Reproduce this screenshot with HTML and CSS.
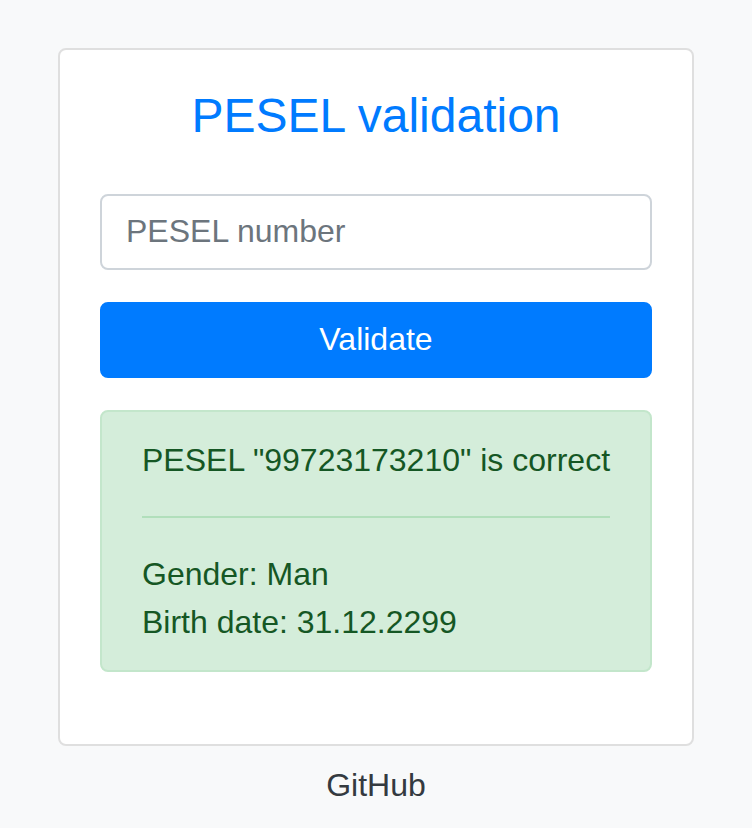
FILE: index.html
```html
<!DOCTYPE html>
<html lang="en">
<head>
<meta charset="utf-8">
<title>PESEL validation</title>
<link rel="stylesheet" href="styles.css">
</head>
<body>
<main class="page">
  <section class="card">
    <h1 class="title">PESEL validation</h1>
    <input class="field" type="text" placeholder="PESEL number">
    <button class="btn" type="button">Validate</button>
    <div class="alert">
      <p class="alert-line">PESEL "99723173210" is correct</p>
      <hr class="divider">
      <p class="alert-line">Gender: Man</p>
      <p class="alert-line">Birth date: 31.12.2299</p>
    </div>
  </section>
  <a class="footer-link" href="#">GitHub</a>
</main>
</body>
</html>
```

FILE: styles.css
```css
* { box-sizing: border-box; }
html, body { margin: 0; padding: 0; }
body {
  background: #f8f9fa;
  font-family: "Liberation Sans", Arial, sans-serif;
  font-size: 32px;
  line-height: 1.5;
  color: #212529;
}
.page {
  padding-top: 48px;
  display: flex;
  flex-direction: column;
  align-items: center;
}
.card {
  width: 636px;
  background: #fff;
  border: 2px solid #dfdfdf;
  border-radius: 8px;
  padding: 37px 40px 40px;
  display: flex;
  flex-direction: column;
}
.title {
  margin: 0 0 49px;
  font-size: 48px;
  font-weight: 400;
  line-height: 57.6px;
  color: #007bff;
  text-align: center;
}
.field {
  display: block;
  width: 100%;
  height: 76px;
  padding: 0 24px;
  font-family: inherit;
  font-size: 32px;
  color: #495057;
  background: #fff;
  border: 2px solid #ced4da;
  border-radius: 8px;
  outline: none;
}
.field::placeholder { color: #6c757d; opacity: 1; }
.btn {
  margin-top: 32px;
  width: 100%;
  height: 76px;
  font-family: inherit;
  font-size: 32px;
  color: #fff;
  background: #007bff;
  border: 2px solid #007bff;
  border-radius: 8px;
  cursor: pointer;
}
.alert {
  margin-top: 32px;
  margin-bottom: 32px;
  padding: 24px 40px;
  background: #d4edda;
  border: 2px solid #c3e6cb;
  border-radius: 8px;
  color: #155724;
}
.alert-line {
  margin: 0;
  line-height: 48px;
  white-space: nowrap;
}
.divider {
  margin: 32px 0;
  border: 0;
  border-top: 2px solid #b1dfbb;
  height: 0;
}
.footer-link {
  margin-top: 15px;
  color: #343a40;
  text-decoration: none;
  line-height: 48px;
}
```
